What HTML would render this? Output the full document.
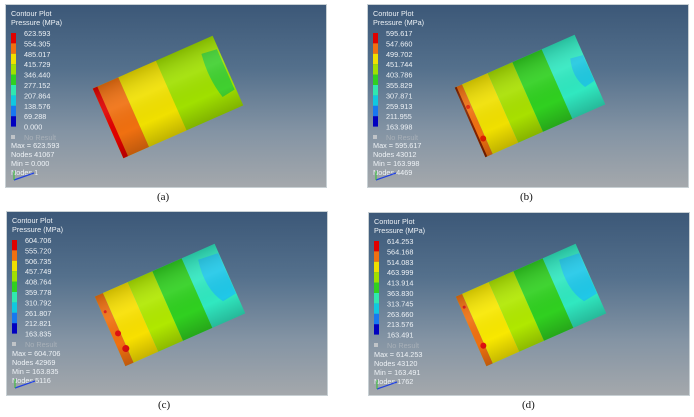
<!DOCTYPE html>
<html><head><meta charset="utf-8"><style>
body{margin:0;width:694px;height:417px;background:#fff;position:relative;overflow:hidden;font-family:"Liberation Sans",sans-serif}
.p{position:absolute;width:322px;height:184px;border:1px solid #c8d0d4;box-sizing:border-box;background:linear-gradient(#3c5878 0%,#54708c 35%,#8494a4 70%,#a4a8ac 100%)}
.p svg{position:absolute;left:0;top:0}
.c{position:absolute;font-family:"Liberation Serif",serif;font-size:11px;color:#111}
</style></head><body>

<svg width="0" height="0" style="position:absolute">
<defs>
<linearGradient id="sh" x1="0" y1="0" x2="0" y2="1">
<stop offset="0" stop-color="#000" stop-opacity="0.18"/>
<stop offset="0.35" stop-color="#fff" stop-opacity="0.08"/>
<stop offset="0.7" stop-color="#000" stop-opacity="0"/>
<stop offset="1" stop-color="#000" stop-opacity="0.2"/>
</linearGradient>
</defs>
</svg>

<!-- panel template via repeated SVG -->
<div class="p" style="left:5px;top:4px">
<svg width="322" height="184" font-size="7.3" fill="#eef2f6">
<text x="5" y="11">Contour Plot</text><text x="5" y="20">Pressure (MPa)</text>
<g><rect x="5" y="28" width="5" height="10.4" fill="#e00000"/><rect x="5" y="38.4" width="5" height="10.4" fill="#f07010"/><rect x="5" y="48.8" width="5" height="10.4" fill="#f0e000"/><rect x="5" y="59.2" width="5" height="10.4" fill="#a0e000"/><rect x="5" y="69.6" width="5" height="10.4" fill="#30d020"/><rect x="5" y="80" width="5" height="10.4" fill="#30e8b0"/><rect x="5" y="90.4" width="5" height="10.4" fill="#10c8e0"/><rect x="5" y="100.8" width="5" height="10.4" fill="#1878f0"/><rect x="5" y="111.2" width="5" height="10.4" fill="#0000c0"/></g>
<text x="18" y="31">623.593</text><text x="18" y="41.4">554.305</text><text x="18" y="51.8">485.017</text><text x="18" y="62.2">415.729</text><text x="18" y="72.6">346.440</text><text x="18" y="83">277.152</text><text x="18" y="93.4">207.864</text><text x="18" y="103.8">138.576</text><text x="18" y="114.2">69.288</text><text x="18" y="124.6">0.000</text>
<rect x="5" y="130" width="4" height="4" fill="#c0c4c8"/><text x="18" y="135" fill="#a8b0b8">No Result</text>
<text x="5" y="143">Max = 623.593</text><text x="5" y="152">Nodes 41067</text><text x="5" y="161">Min = 0.000</text><text x="5" y="170">Nodes 1</text>
<path d="M8 175 L28 168" stroke="#2040e0" stroke-width="1.2"/><path d="M8 175 L8 166" stroke="#30c030" stroke-width="1"/>
<g transform="translate(162,92) rotate(-23.8)">
<rect x="-65.5" y="-38" width="131" height="76" fill="#a0e000"/>
<rect x="-65.5" y="-38" width="28" height="76" fill="#f07010"/>
<rect x="-37.5" y="-38" width="41" height="76" fill="#f0e000"/>
<rect x="-65.5" y="-38" width="5" height="76" fill="#e00000"/>
<path d="M48 -26 Q44 0 50 22 L64 20 L64 -24Z" fill="#40d030"/>
<rect x="-65.5" y="-38" width="131" height="76" fill="url(#sh)"/>
</g></svg></div>

<div class="p" style="left:367px;top:4px">
<svg width="322" height="184" font-size="7.3" fill="#eef2f6">
<text x="5" y="11">Contour Plot</text><text x="5" y="20">Pressure (MPa)</text>
<g><rect x="5" y="28" width="5" height="10.4" fill="#e00000"/><rect x="5" y="38.4" width="5" height="10.4" fill="#f07010"/><rect x="5" y="48.8" width="5" height="10.4" fill="#f0e000"/><rect x="5" y="59.2" width="5" height="10.4" fill="#a0e000"/><rect x="5" y="69.6" width="5" height="10.4" fill="#30d020"/><rect x="5" y="80" width="5" height="10.4" fill="#30e8b0"/><rect x="5" y="90.4" width="5" height="10.4" fill="#10c8e0"/><rect x="5" y="100.8" width="5" height="10.4" fill="#1878f0"/><rect x="5" y="111.2" width="5" height="10.4" fill="#0000c0"/></g>
<text x="18" y="31">595.617</text><text x="18" y="41.4">547.660</text><text x="18" y="51.8">499.702</text><text x="18" y="62.2">451.744</text><text x="18" y="72.6">403.786</text><text x="18" y="83">355.829</text><text x="18" y="93.4">307.871</text><text x="18" y="103.8">259.913</text><text x="18" y="114.2">211.955</text><text x="18" y="124.6">163.998</text>
<rect x="5" y="130" width="4" height="4" fill="#c0c4c8"/><text x="18" y="135" fill="#a8b0b8">No Result</text>
<text x="5" y="143">Max = 595.617</text><text x="5" y="152">Nodes 43012</text><text x="5" y="161">Min = 163.998</text><text x="5" y="170">Nodes 4469</text>
<path d="M8 175 L28 168" stroke="#2040e0" stroke-width="1.2"/><path d="M8 175 L8 166" stroke="#30c030" stroke-width="1"/>
<g transform="translate(162,91) rotate(-23.8)">
<rect x="-65.5" y="-38" width="131" height="76" fill="#30e8c0"/>
<rect x="-65.5" y="-38" width="8" height="76" fill="#f07010"/>
<rect x="-57.5" y="-38" width="28" height="76" fill="#f0e000"/>
<rect x="-29.5" y="-38" width="27" height="76" fill="#a8e000"/>
<rect x="-2.5" y="-38" width="32" height="76" fill="#30d020"/>
<rect x="-65.5" y="-38" width="2" height="76" fill="#802000"/>
<path d="M52 -18 Q46 0 54 14 L65 12 L65 -16Z" fill="#20c8e0"/>
<circle cx="-60" cy="20" r="3" fill="#e02000"/><circle cx="-61" cy="-15" r="2" fill="#e02000"/>
<rect x="-65.5" y="-38" width="131" height="76" fill="url(#sh)"/>
</g></svg></div>

<div class="p" style="left:6px;top:211px;height:185px">
<svg width="322" height="184" font-size="7.3" fill="#eef2f6">
<text x="5" y="11">Contour Plot</text><text x="5" y="20">Pressure (MPa)</text>
<g><rect x="5" y="28" width="5" height="10.4" fill="#e00000"/><rect x="5" y="38.4" width="5" height="10.4" fill="#f07010"/><rect x="5" y="48.8" width="5" height="10.4" fill="#f0e000"/><rect x="5" y="59.2" width="5" height="10.4" fill="#a0e000"/><rect x="5" y="69.6" width="5" height="10.4" fill="#30d020"/><rect x="5" y="80" width="5" height="10.4" fill="#30e8b0"/><rect x="5" y="90.4" width="5" height="10.4" fill="#10c8e0"/><rect x="5" y="100.8" width="5" height="10.4" fill="#1878f0"/><rect x="5" y="111.2" width="5" height="10.4" fill="#0000c0"/></g>
<text x="18" y="31">604.706</text><text x="18" y="41.4">555.720</text><text x="18" y="51.8">506.735</text><text x="18" y="62.2">457.749</text><text x="18" y="72.6">408.764</text><text x="18" y="83">359.778</text><text x="18" y="93.4">310.792</text><text x="18" y="103.8">261.807</text><text x="18" y="114.2">212.821</text><text x="18" y="124.6">163.835</text>
<rect x="5" y="130" width="4" height="4" fill="#c0c4c8"/><text x="18" y="135" fill="#a8b0b8">No Result</text>
<text x="5" y="144">Max = 604.706</text><text x="5" y="153">Nodes 42969</text><text x="5" y="162">Min = 163.835</text><text x="5" y="171">Nodes 5116</text>
<path d="M8 176 L28 169" stroke="#2040e0" stroke-width="1.2"/><path d="M8 176 L8 167" stroke="#30c030" stroke-width="1"/>
<g transform="translate(163,93) rotate(-23.8)">
<rect x="-65.5" y="-38" width="131" height="76" fill="#30e8c0"/>
<rect x="-65.5" y="-38" width="9" height="76" fill="#f07010"/>
<rect x="-56.5" y="-38" width="27" height="76" fill="#f8e000"/>
<rect x="-29.5" y="-38" width="27" height="76" fill="#b0e800"/>
<rect x="-2.5" y="-38" width="32" height="76" fill="#30d020"/>
<path d="M44 -30 Q38 0 50 18 L65 16 L65 -28Z" fill="#20c8e8"/>
<circle cx="-59" cy="5" r="3" fill="#e01010"/><circle cx="-58" cy="22" r="3.5" fill="#e01010"/><circle cx="-62" cy="-20" r="1.5" fill="#e01010"/>
<rect x="-65.5" y="-38" width="131" height="76" fill="url(#sh)"/>
</g></svg></div>

<div class="p" style="left:368px;top:212px;height:184px">
<svg width="322" height="184" font-size="7.3" fill="#eef2f6">
<text x="5" y="11">Contour Plot</text><text x="5" y="20">Pressure (MPa)</text>
<g><rect x="5" y="28" width="5" height="10.4" fill="#e00000"/><rect x="5" y="38.4" width="5" height="10.4" fill="#f07010"/><rect x="5" y="48.8" width="5" height="10.4" fill="#f0e000"/><rect x="5" y="59.2" width="5" height="10.4" fill="#a0e000"/><rect x="5" y="69.6" width="5" height="10.4" fill="#30d020"/><rect x="5" y="80" width="5" height="10.4" fill="#30e8b0"/><rect x="5" y="90.4" width="5" height="10.4" fill="#10c8e0"/><rect x="5" y="100.8" width="5" height="10.4" fill="#1878f0"/><rect x="5" y="111.2" width="5" height="10.4" fill="#0000c0"/></g>
<text x="18" y="31">614.253</text><text x="18" y="41.4">564.168</text><text x="18" y="51.8">514.083</text><text x="18" y="62.2">463.999</text><text x="18" y="72.6">413.914</text><text x="18" y="83">363.830</text><text x="18" y="93.4">313.745</text><text x="18" y="103.8">263.660</text><text x="18" y="114.2">213.576</text><text x="18" y="124.6">163.491</text>
<rect x="5" y="130" width="4" height="4" fill="#c0c4c8"/><text x="18" y="135" fill="#a8b0b8">No Result</text>
<text x="5" y="144">Max = 614.253</text><text x="5" y="153">Nodes 43120</text><text x="5" y="162">Min = 163.491</text><text x="5" y="171">Nodes 1762</text>
<path d="M8 176 L28 169" stroke="#2040e0" stroke-width="1.2"/><path d="M8 176 L8 167" stroke="#30c030" stroke-width="1"/>
<g transform="translate(162,92) rotate(-23.8)">
<rect x="-65.5" y="-38" width="131" height="76" fill="#30e8c0"/>
<rect x="-65.5" y="-38" width="7" height="76" fill="#f07010"/>
<rect x="-58.5" y="-38" width="29" height="76" fill="#f8e800"/>
<rect x="-29.5" y="-38" width="27" height="76" fill="#b0e800"/>
<rect x="-2.5" y="-38" width="32" height="76" fill="#30d020"/>
<path d="M44 -30 Q38 0 50 18 L65 16 L65 -28Z" fill="#20c8e8"/>
<circle cx="-60" cy="18" r="3" fill="#e01010"/><circle cx="-62" cy="-25" r="1.5" fill="#e01010"/>
<rect x="-65.5" y="-38" width="131" height="76" fill="url(#sh)"/>
</g></svg></div>

<div class="c" style="left:157px;top:191px">(a)</div>
<div class="c" style="left:520px;top:191px">(b)</div>
<div class="c" style="left:158px;top:399px">(c)</div>
<div class="c" style="left:522px;top:399px">(d)</div>
</body></html>
